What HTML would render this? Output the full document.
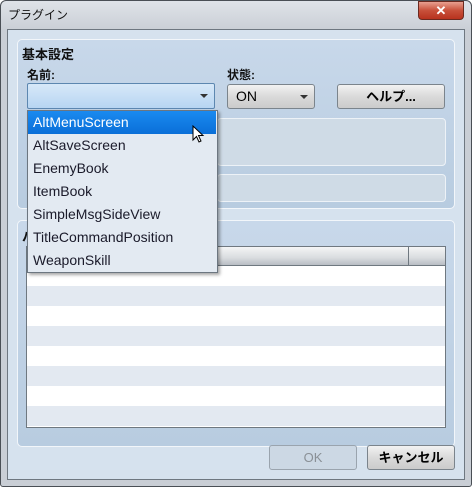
<!DOCTYPE html>
<html><head><meta charset="utf-8"><style>
*{margin:0;padding:0;box-sizing:border-box}
body{width:472px;height:487px;overflow:hidden;font-family:"Liberation Sans","Noto Sans CJK JP",sans-serif;background:#fff;position:relative}
.a{position:absolute}
.win{left:0;top:0;width:472px;height:487px;border:1px solid #4a4f55;border-radius:6px 6px 3px 3px;background:linear-gradient(#dfe3e8,#c9ced5 30px,#c9ced5)}
.client{left:7px;top:29px;width:458px;height:451px;border:1px solid #6e7780;background:#d6e2ee}
.grp{border:1px solid #f2f6fa;border-radius:5px;background:linear-gradient(#c8d8ea,#b8cce0)}
.inner{border:1px solid #edf2f7;border-radius:4px;background:#cfdbe6}
.btn{border:1px solid #7b848c;border-radius:3px;background:linear-gradient(#f2f2f2,#dadada 50%,#cbcbcb);font-size:13px;text-align:center;color:#000}
.lbl{font-size:12px;font-weight:bold;color:#111}
.item{left:1px;width:188px;height:23px;font-size:14px;line-height:23px;padding-left:5px;color:#1a1a2a}
</style></head><body>
<div class="a win"></div>
<div class="a" style="left:8px;top:6px;font-size:12px;color:#111">プラグイン</div>
<div class="a" style="left:418px;top:1px;width:46px;height:19px;border:1px solid #6b2a20;border-radius:0 0 4px 4px;background:linear-gradient(#e8a090,#c8503a 50%,#b8321e);color:#fff;font-weight:bold;font-size:13px;text-align:center;line-height:17px">✕</div>
<div class="a client"></div>
<div class="a grp" style="left:17px;top:39px;width:438px;height:170px"></div>
<div class="a lbl" style="left:22px;top:44px;font-size:13px">基本設定</div>
<div class="a lbl" style="left:27px;top:66px">名前:</div>
<div class="a lbl" style="left:227px;top:66px">状態:</div>
<div class="a" style="left:27px;top:83px;width:188px;height:26px;border:1px solid #5d87b0;border-radius:2px;background:linear-gradient(#d7e8f8,#b7d5f2)"></div>
<div class="a" style="left:200px;top:94px;width:0;height:0;border-left:4px solid transparent;border-right:4px solid transparent;border-top:4px solid #333"></div>
<div class="a btn" style="left:227px;top:84px;width:88px;height:25px;text-align:left;padding-left:8px;line-height:23px;font-size:14px">ON</div>
<div class="a" style="left:300px;top:95px;width:0;height:0;border-left:4px solid transparent;border-right:4px solid transparent;border-top:4px solid #333"></div>
<div class="a btn" style="left:337px;top:84px;width:108px;height:25px;line-height:23px;font-weight:bold">ヘルプ...</div>
<div class="a inner" style="left:217px;top:118px;width:229px;height:48px"></div>
<div class="a inner" style="left:217px;top:174px;width:229px;height:28px"></div>
<div class="a grp" style="left:17px;top:220px;width:438px;height:227px"></div>
<div class="a lbl" style="left:22px;top:226px;font-size:13px">パラメータ</div>
<div class="a" style="left:26px;top:246px;width:420px;height:182px;border:1px solid #6f7880;background:repeating-linear-gradient(#fff 0 20px,#e3e9f1 20px 40px);background-position:0 19px"></div>
<div class="a" style="left:27px;top:247px;width:418px;height:19px;background:linear-gradient(#f4f5f6,#d9dcdf 60%,#b9bec4);border-bottom:1px solid #6f7880"></div>
<div class="a" style="left:408px;top:247px;width:1px;height:19px;background:#6f7880"></div>
<div class="a" style="left:27px;top:110px;width:191px;height:163px;border:1px solid #6c7680;background:#e3eaf2;box-shadow:2px 2px 3px rgba(0,0,0,.35)"></div>
<div class="a item" style="left:28px;top:111px;background:linear-gradient(#1a8af0,#0a6fd8);color:#fff">AltMenuScreen</div>
<div class="a item" style="left:28px;top:134px">AltSaveScreen</div>
<div class="a item" style="left:28px;top:157px">EnemyBook</div>
<div class="a item" style="left:28px;top:180px">ItemBook</div>
<div class="a item" style="left:28px;top:203px">SimpleMsgSideView</div>
<div class="a item" style="left:28px;top:226px">TitleCommandPosition</div>
<div class="a item" style="left:28px;top:249px">WeaponSkill</div>
<svg class="a" style="left:192px;top:125px" width="14" height="20" viewBox="0 0 14 20"><path d="M1 1 L1 15 L4.5 11.5 L7 17 L9 16 L6.5 10.5 L11 10.5 Z" fill="#fff" stroke="#000" stroke-width="1"/></svg>
<div class="a btn" style="left:269px;top:445px;width:88px;height:25px;line-height:23px;color:#8a9096;background:#ccd8e4;border-color:#9aa4ae">OK</div>
<div class="a btn" style="left:367px;top:445px;width:88px;height:25px;line-height:23px;font-weight:bold">キャンセル</div>
</body></html>
